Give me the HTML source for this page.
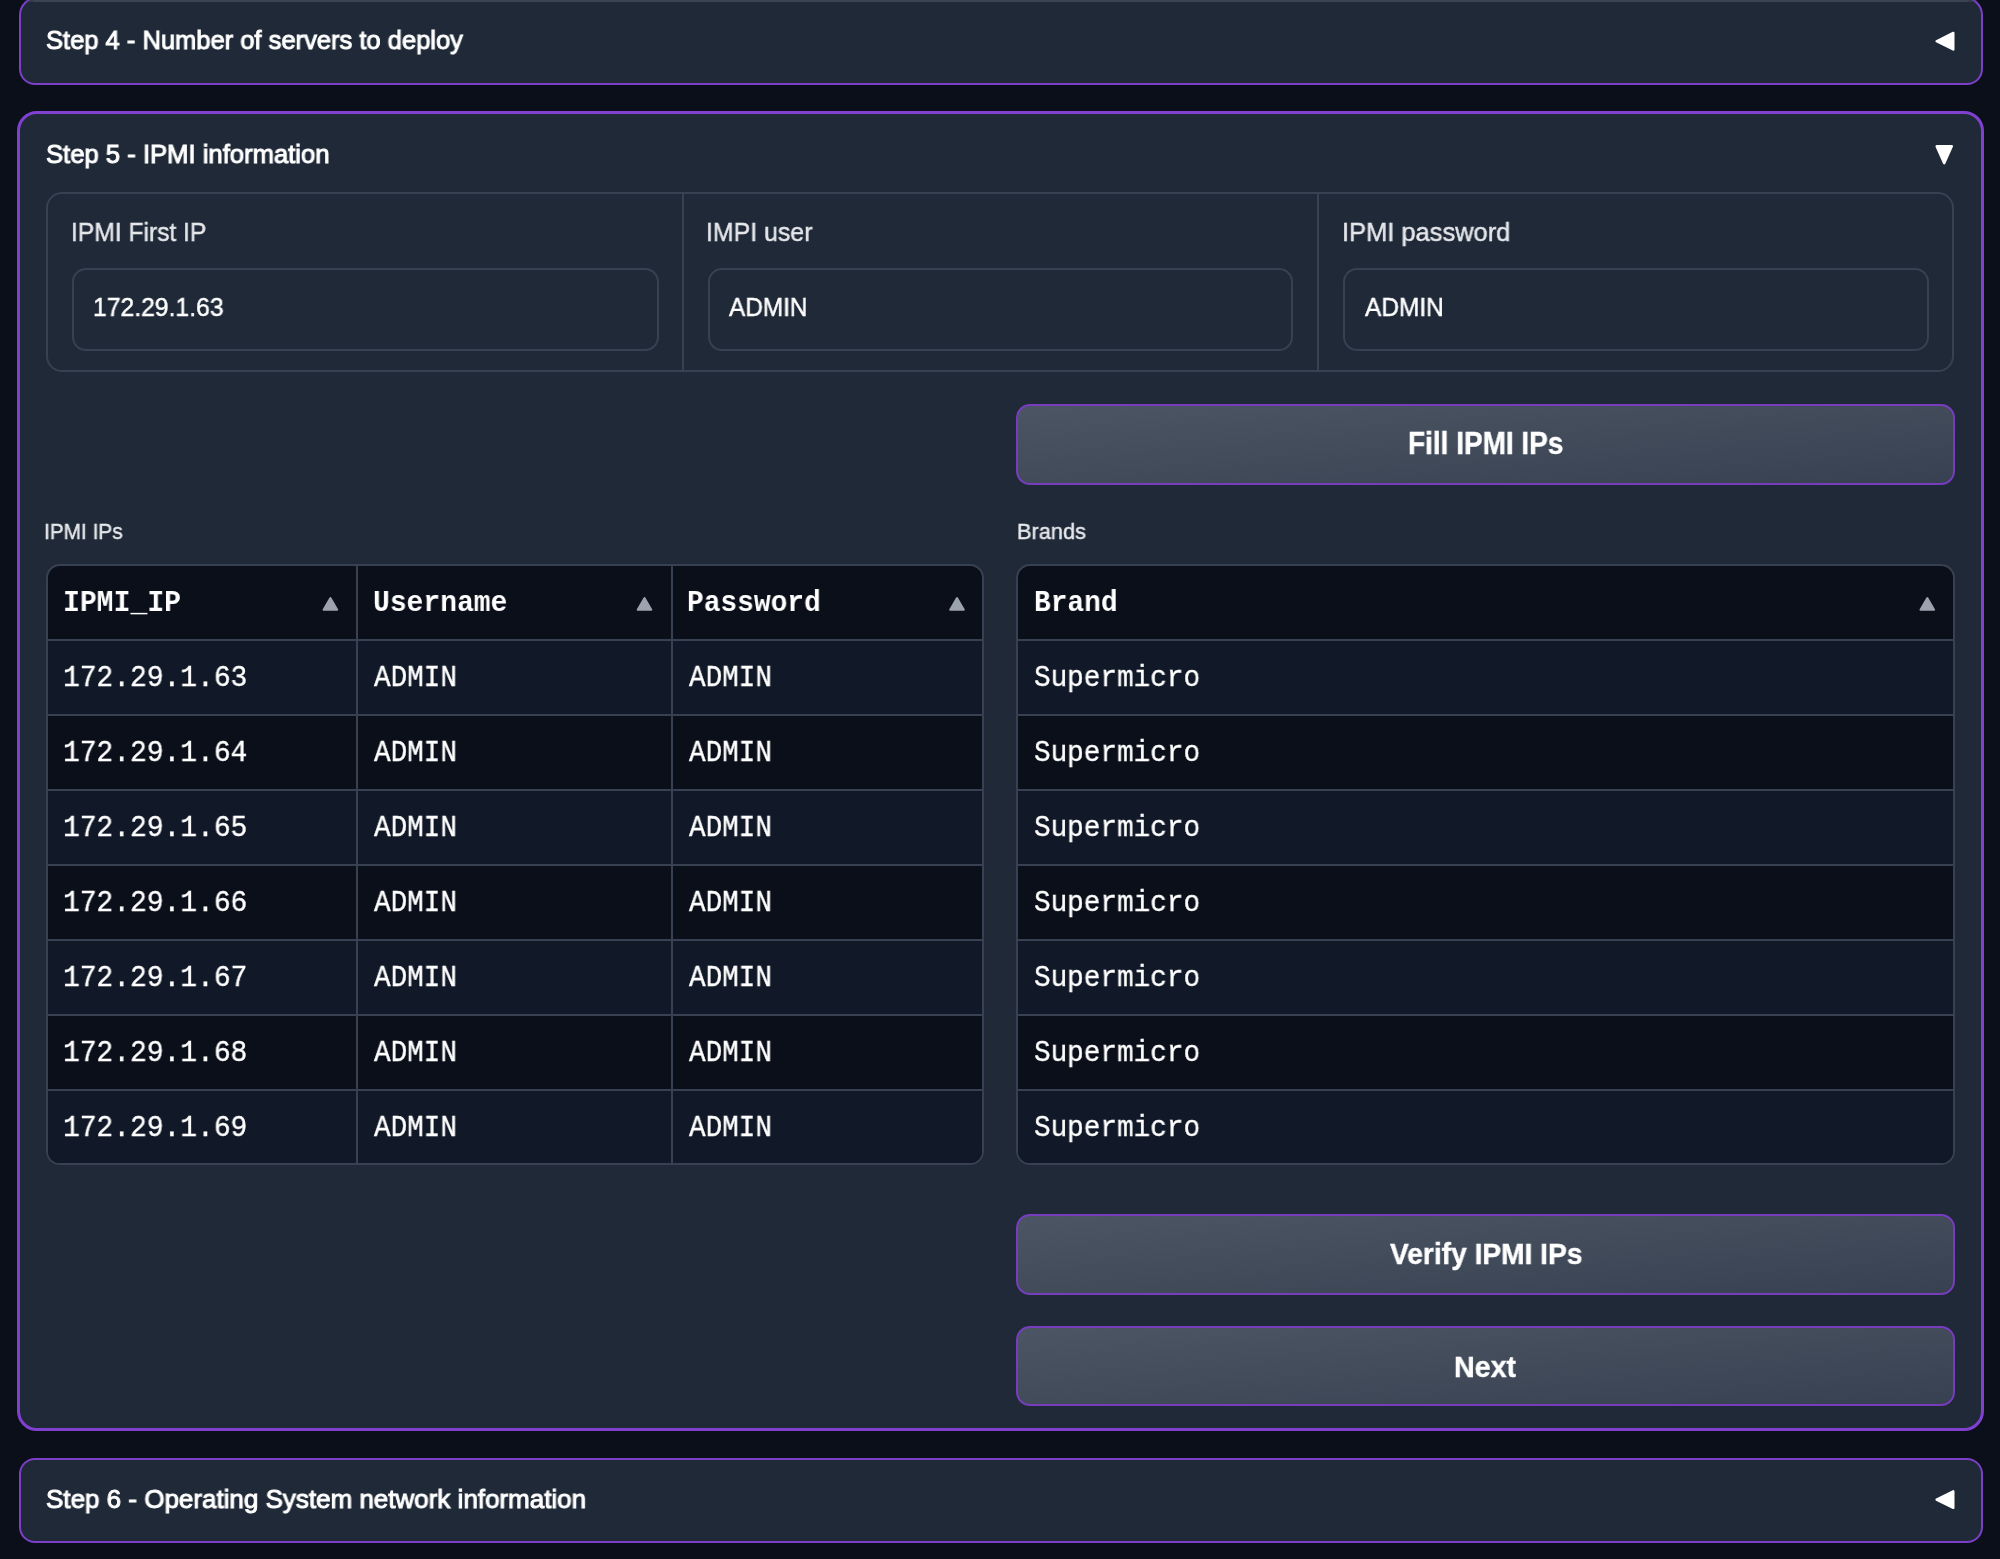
<!DOCTYPE html>
<html><head><meta charset="utf-8"><style>
html,body{margin:0;padding:0;width:2000px;height:1559px;overflow:hidden;background:#0b0f19;}
.a{position:absolute;}
.t{position:absolute;white-space:pre;line-height:1;transform-origin:0 0;will-change:transform;font-family:"Liberation Sans",sans-serif;}
.m{font-family:"Liberation Mono",monospace;}
</style></head><body>
<div class="a" style="left:19px;top:-3px;width:1964px;height:88px;box-sizing:border-box;background:#1f2937;border:2px solid #7b3fc8;border-radius:18px 18px 16px 16px;"></div>
<div class="a" style="left:24px;top:0px;width:1954px;height:2px;background:linear-gradient(to right,rgba(59,68,83,0),#3b4453 12px,#3b4453 calc(100% - 12px),rgba(59,68,83,0));"></div>
<div class="a" style="left:17px;top:111px;width:1967px;height:1320px;box-sizing:border-box;background:#1f2937;border:3px solid #8040d0;border-radius:20px;"></div>
<div class="a" style="left:19px;top:1458px;width:1964px;height:85px;box-sizing:border-box;background:#1f2937;border:2px solid #7b3fc8;border-radius:16px;"></div>
<div class="a" style="left:46px;top:192px;width:1908px;height:180px;box-sizing:border-box;border:2px solid #374151;border-radius:16px;"></div>
<div class="a" style="left:682px;top:194px;width:2px;height:176px;background:#374151;"></div>
<div class="a" style="left:1317px;top:194px;width:2px;height:176px;background:#374151;"></div>
<div class="a" style="left:72px;top:268px;width:587px;height:83px;box-sizing:border-box;border:2px solid #374151;border-radius:14px;"></div>
<div class="a" style="left:708px;top:268px;width:585px;height:83px;box-sizing:border-box;border:2px solid #374151;border-radius:14px;"></div>
<div class="a" style="left:1343px;top:268px;width:586px;height:83px;box-sizing:border-box;border:2px solid #374151;border-radius:14px;"></div>
<div class="a" style="left:1016px;top:404px;width:939px;height:81px;box-sizing:border-box;border:2px solid #773dbd;border-radius:14px;background:linear-gradient(to bottom right,#4b5563,#374151);"></div>
<div class="a" style="left:1016px;top:1214px;width:939px;height:81px;box-sizing:border-box;border:2px solid #773dbd;border-radius:14px;background:linear-gradient(to bottom right,#4b5563,#374151);"></div>
<div class="a" style="left:1016px;top:1326px;width:939px;height:80px;box-sizing:border-box;border:2px solid #773dbd;border-radius:14px;background:linear-gradient(to bottom right,#4b5563,#374151);"></div>
<div class="a" style="left:46px;top:564px;width:938px;height:601px;box-sizing:border-box;border:2px solid #374151;border-radius:14px;overflow:hidden;background:#0b0f19;"></div>
<div class="a" style="left:48px;top:641px;width:934px;height:73px;background:#111827;"></div>
<div class="a" style="left:48px;top:716px;width:934px;height:73px;background:#0b0f19;"></div>
<div class="a" style="left:48px;top:791px;width:934px;height:73px;background:#111827;"></div>
<div class="a" style="left:48px;top:866px;width:934px;height:73px;background:#0b0f19;"></div>
<div class="a" style="left:48px;top:941px;width:934px;height:73px;background:#111827;"></div>
<div class="a" style="left:48px;top:1016px;width:934px;height:73px;background:#0b0f19;"></div>
<div class="a" style="left:48px;top:1091px;width:934px;height:72px;background:#111827;border-radius:0 0 12px 12px;"></div>
<div class="a" style="left:48px;top:639px;width:934px;height:2px;background:#374151;"></div>
<div class="a" style="left:48px;top:714px;width:934px;height:2px;background:#374151;"></div>
<div class="a" style="left:48px;top:789px;width:934px;height:2px;background:#374151;"></div>
<div class="a" style="left:48px;top:864px;width:934px;height:2px;background:#374151;"></div>
<div class="a" style="left:48px;top:939px;width:934px;height:2px;background:#374151;"></div>
<div class="a" style="left:48px;top:1014px;width:934px;height:2px;background:#374151;"></div>
<div class="a" style="left:48px;top:1089px;width:934px;height:2px;background:#374151;"></div>
<div class="a" style="left:356px;top:566px;width:2px;height:597px;background:#374151;"></div>
<div class="a" style="left:671px;top:566px;width:2px;height:597px;background:#374151;"></div>
<div class="a" style="left:1016px;top:564px;width:939px;height:601px;box-sizing:border-box;border:2px solid #374151;border-radius:14px;overflow:hidden;background:#0b0f19;"></div>
<div class="a" style="left:1018px;top:641px;width:935px;height:73px;background:#111827;"></div>
<div class="a" style="left:1018px;top:716px;width:935px;height:73px;background:#0b0f19;"></div>
<div class="a" style="left:1018px;top:791px;width:935px;height:73px;background:#111827;"></div>
<div class="a" style="left:1018px;top:866px;width:935px;height:73px;background:#0b0f19;"></div>
<div class="a" style="left:1018px;top:941px;width:935px;height:73px;background:#111827;"></div>
<div class="a" style="left:1018px;top:1016px;width:935px;height:73px;background:#0b0f19;"></div>
<div class="a" style="left:1018px;top:1091px;width:935px;height:72px;background:#111827;border-radius:0 0 12px 12px;"></div>
<div class="a" style="left:1018px;top:639px;width:935px;height:2px;background:#374151;"></div>
<div class="a" style="left:1018px;top:714px;width:935px;height:2px;background:#374151;"></div>
<div class="a" style="left:1018px;top:789px;width:935px;height:2px;background:#374151;"></div>
<div class="a" style="left:1018px;top:864px;width:935px;height:2px;background:#374151;"></div>
<div class="a" style="left:1018px;top:939px;width:935px;height:2px;background:#374151;"></div>
<div class="a" style="left:1018px;top:1014px;width:935px;height:2px;background:#374151;"></div>
<div class="a" style="left:1018px;top:1089px;width:935px;height:2px;background:#374151;"></div>
<div class="t" style="left:45.83px;top:27.21px;font-size:26.377px;font-weight:400;color:#ffffff;transform:scaleX(0.9679);-webkit-text-stroke:1.0px #ffffff;">Step 4 - Number of servers to deploy</div>
<div class="t" style="left:45.78px;top:141.46px;font-size:26.377px;font-weight:400;color:#ffffff;transform:scaleX(0.9722);-webkit-text-stroke:1.0px #ffffff;">Step 5 - IPMI information</div>
<div class="t" style="left:46.01px;top:1485.51px;font-size:26.377px;font-weight:400;color:#ffffff;transform:scaleX(0.9857);-webkit-text-stroke:1.0px #ffffff;">Step 6 - Operating System network information</div>
<div class="t" style="left:71.12px;top:219.17px;font-size:26.159px;font-weight:400;color:#e5e7eb;transform:scaleX(0.9418);-webkit-text-stroke:0.45px #e5e7eb;">IPMI First IP</div>
<div class="t" style="left:706.40px;top:219.17px;font-size:26.159px;font-weight:400;color:#e5e7eb;transform:scaleX(0.9518);-webkit-text-stroke:0.45px #e5e7eb;">IMPI user</div>
<div class="t" style="left:1341.80px;top:219.17px;font-size:26.159px;font-weight:400;color:#e5e7eb;transform:scaleX(0.9738);-webkit-text-stroke:0.45px #e5e7eb;">IPMI password</div>
<div class="t" style="left:93.16px;top:294.98px;font-size:25.435px;font-weight:400;color:#ffffff;transform:scaleX(0.972);-webkit-text-stroke:0.45px #ffffff;">172.29.1.63</div>
<div class="t" style="left:729.30px;top:294.98px;font-size:25.435px;font-weight:400;color:#ffffff;transform:scaleX(0.9588);-webkit-text-stroke:0.45px #ffffff;">ADMIN</div>
<div class="t" style="left:1364.75px;top:294.98px;font-size:25.435px;font-weight:400;color:#ffffff;transform:scaleX(0.9625);-webkit-text-stroke:0.45px #ffffff;">ADMIN</div>
<div class="t" style="left:1408.08px;top:428.94px;font-size:30.725px;font-weight:700;color:#ffffff;transform:scaleX(0.9107);-webkit-text-stroke:0.4px #ffffff;">Fill IPMI IPs</div>
<div class="t" style="left:1390.00px;top:1239.21px;font-size:30.29px;font-weight:700;color:#ffffff;transform:scaleX(0.9296);-webkit-text-stroke:0.4px #ffffff;">Verify IPMI IPs</div>
<div class="t" style="left:1454.11px;top:1352.21px;font-size:30.29px;font-weight:700;color:#ffffff;transform:scaleX(0.9469);-webkit-text-stroke:0.4px #ffffff;">Next</div>
<div class="t" style="left:44.38px;top:520.98px;font-size:22.246px;font-weight:400;color:#e5e7eb;transform:scaleX(0.936);-webkit-text-stroke:0.45px #e5e7eb;">IPMI IPs</div>
<div class="t" style="left:1017.12px;top:520.98px;font-size:22.246px;font-weight:400;color:#e5e7eb;transform:scaleX(0.9797);-webkit-text-stroke:0.45px #e5e7eb;">Brands</div>
<div class="t m" style="left:63.15px;top:588.22px;font-size:30.303px;font-weight:700;color:#ffffff;transform:scaleX(0.9274);-webkit-text-stroke:0px #ffffff;">IPMI_IP</div>
<div class="t m" style="left:373.35px;top:588.22px;font-size:30.303px;font-weight:700;color:#ffffff;transform:scaleX(0.9239);-webkit-text-stroke:0px #ffffff;">Username</div>
<div class="t m" style="left:687.16px;top:588.22px;font-size:30.303px;font-weight:700;color:#ffffff;transform:scaleX(0.9197);-webkit-text-stroke:0px #ffffff;">Password</div>
<div class="t m" style="left:1033.76px;top:588.22px;font-size:30.303px;font-weight:700;color:#ffffff;transform:scaleX(0.9195);-webkit-text-stroke:0px #ffffff;">Brand</div>
<div class="t m" style="left:62.60px;top:663.88px;font-size:29.47px;font-weight:400;color:#ffffff;transform:scaleX(0.9476);-webkit-text-stroke:0.35px #ffffff;">172.29.1.63</div>
<div class="t m" style="left:374.40px;top:663.88px;font-size:29.47px;font-weight:400;color:#ffffff;transform:scaleX(0.9379);-webkit-text-stroke:0.35px #ffffff;">ADMIN</div>
<div class="t m" style="left:689.00px;top:663.88px;font-size:29.47px;font-weight:400;color:#ffffff;transform:scaleX(0.9379);-webkit-text-stroke:0.35px #ffffff;">ADMIN</div>
<div class="t m" style="left:1034.46px;top:663.88px;font-size:29.47px;font-weight:400;color:#ffffff;transform:scaleX(0.9388);-webkit-text-stroke:0.35px #ffffff;">Supermicro</div>
<div class="t m" style="left:62.60px;top:738.88px;font-size:29.47px;font-weight:400;color:#ffffff;transform:scaleX(0.9476);-webkit-text-stroke:0.35px #ffffff;">172.29.1.64</div>
<div class="t m" style="left:374.40px;top:738.88px;font-size:29.47px;font-weight:400;color:#ffffff;transform:scaleX(0.9379);-webkit-text-stroke:0.35px #ffffff;">ADMIN</div>
<div class="t m" style="left:689.00px;top:738.88px;font-size:29.47px;font-weight:400;color:#ffffff;transform:scaleX(0.9379);-webkit-text-stroke:0.35px #ffffff;">ADMIN</div>
<div class="t m" style="left:1034.46px;top:738.88px;font-size:29.47px;font-weight:400;color:#ffffff;transform:scaleX(0.9388);-webkit-text-stroke:0.35px #ffffff;">Supermicro</div>
<div class="t m" style="left:62.60px;top:813.88px;font-size:29.47px;font-weight:400;color:#ffffff;transform:scaleX(0.9476);-webkit-text-stroke:0.35px #ffffff;">172.29.1.65</div>
<div class="t m" style="left:374.40px;top:813.88px;font-size:29.47px;font-weight:400;color:#ffffff;transform:scaleX(0.9379);-webkit-text-stroke:0.35px #ffffff;">ADMIN</div>
<div class="t m" style="left:689.00px;top:813.88px;font-size:29.47px;font-weight:400;color:#ffffff;transform:scaleX(0.9379);-webkit-text-stroke:0.35px #ffffff;">ADMIN</div>
<div class="t m" style="left:1034.46px;top:813.88px;font-size:29.47px;font-weight:400;color:#ffffff;transform:scaleX(0.9388);-webkit-text-stroke:0.35px #ffffff;">Supermicro</div>
<div class="t m" style="left:62.60px;top:888.88px;font-size:29.47px;font-weight:400;color:#ffffff;transform:scaleX(0.9476);-webkit-text-stroke:0.35px #ffffff;">172.29.1.66</div>
<div class="t m" style="left:374.40px;top:888.88px;font-size:29.47px;font-weight:400;color:#ffffff;transform:scaleX(0.9379);-webkit-text-stroke:0.35px #ffffff;">ADMIN</div>
<div class="t m" style="left:689.00px;top:888.88px;font-size:29.47px;font-weight:400;color:#ffffff;transform:scaleX(0.9379);-webkit-text-stroke:0.35px #ffffff;">ADMIN</div>
<div class="t m" style="left:1034.46px;top:888.88px;font-size:29.47px;font-weight:400;color:#ffffff;transform:scaleX(0.9388);-webkit-text-stroke:0.35px #ffffff;">Supermicro</div>
<div class="t m" style="left:62.60px;top:963.88px;font-size:29.47px;font-weight:400;color:#ffffff;transform:scaleX(0.9476);-webkit-text-stroke:0.35px #ffffff;">172.29.1.67</div>
<div class="t m" style="left:374.40px;top:963.88px;font-size:29.47px;font-weight:400;color:#ffffff;transform:scaleX(0.9379);-webkit-text-stroke:0.35px #ffffff;">ADMIN</div>
<div class="t m" style="left:689.00px;top:963.88px;font-size:29.47px;font-weight:400;color:#ffffff;transform:scaleX(0.9379);-webkit-text-stroke:0.35px #ffffff;">ADMIN</div>
<div class="t m" style="left:1034.46px;top:963.88px;font-size:29.47px;font-weight:400;color:#ffffff;transform:scaleX(0.9388);-webkit-text-stroke:0.35px #ffffff;">Supermicro</div>
<div class="t m" style="left:62.60px;top:1038.88px;font-size:29.47px;font-weight:400;color:#ffffff;transform:scaleX(0.9476);-webkit-text-stroke:0.35px #ffffff;">172.29.1.68</div>
<div class="t m" style="left:374.40px;top:1038.88px;font-size:29.47px;font-weight:400;color:#ffffff;transform:scaleX(0.9379);-webkit-text-stroke:0.35px #ffffff;">ADMIN</div>
<div class="t m" style="left:689.00px;top:1038.88px;font-size:29.47px;font-weight:400;color:#ffffff;transform:scaleX(0.9379);-webkit-text-stroke:0.35px #ffffff;">ADMIN</div>
<div class="t m" style="left:1034.46px;top:1038.88px;font-size:29.47px;font-weight:400;color:#ffffff;transform:scaleX(0.9388);-webkit-text-stroke:0.35px #ffffff;">Supermicro</div>
<div class="t m" style="left:62.60px;top:1113.88px;font-size:29.47px;font-weight:400;color:#ffffff;transform:scaleX(0.9476);-webkit-text-stroke:0.35px #ffffff;">172.29.1.69</div>
<div class="t m" style="left:374.40px;top:1113.88px;font-size:29.47px;font-weight:400;color:#ffffff;transform:scaleX(0.9379);-webkit-text-stroke:0.35px #ffffff;">ADMIN</div>
<div class="t m" style="left:689.00px;top:1113.88px;font-size:29.47px;font-weight:400;color:#ffffff;transform:scaleX(0.9379);-webkit-text-stroke:0.35px #ffffff;">ADMIN</div>
<div class="t m" style="left:1034.46px;top:1113.88px;font-size:29.47px;font-weight:400;color:#ffffff;transform:scaleX(0.9388);-webkit-text-stroke:0.35px #ffffff;">Supermicro</div>
<svg class="a" style="left:0;top:0" width="2000" height="1559" viewBox="0 0 2000 1559">
<polygon points="1936.6,41.2 1953.3,32.9 1953.3,49.5" fill="#ffffff" stroke="#ffffff" stroke-width="2.4" stroke-linejoin="round"/>
<polygon points="1936.6,146.3 1951.8,146.3 1944.2,163.2" fill="#ffffff" stroke="#ffffff" stroke-width="2.4" stroke-linejoin="round"/>
<polygon points="1936.6,1499.6 1953.3,1491.3 1953.3,1507.9" fill="#ffffff" stroke="#ffffff" stroke-width="2.4" stroke-linejoin="round"/>
<polygon points="323.59999999999997,609.8 337.2,609.8 330.4,598.0" fill="#9ca3af" stroke="#9ca3af" stroke-width="2.0" stroke-linejoin="round"/>
<polygon points="637.7,609.8 651.3,609.8 644.5,598.0" fill="#9ca3af" stroke="#9ca3af" stroke-width="2.0" stroke-linejoin="round"/>
<polygon points="950.2,609.8 963.8,609.8 957,598.0" fill="#9ca3af" stroke="#9ca3af" stroke-width="2.0" stroke-linejoin="round"/>
<polygon points="1920.5,609.8 1934.1,609.8 1927.3,598.0" fill="#9ca3af" stroke="#9ca3af" stroke-width="2.0" stroke-linejoin="round"/>
</svg>
</body></html>
